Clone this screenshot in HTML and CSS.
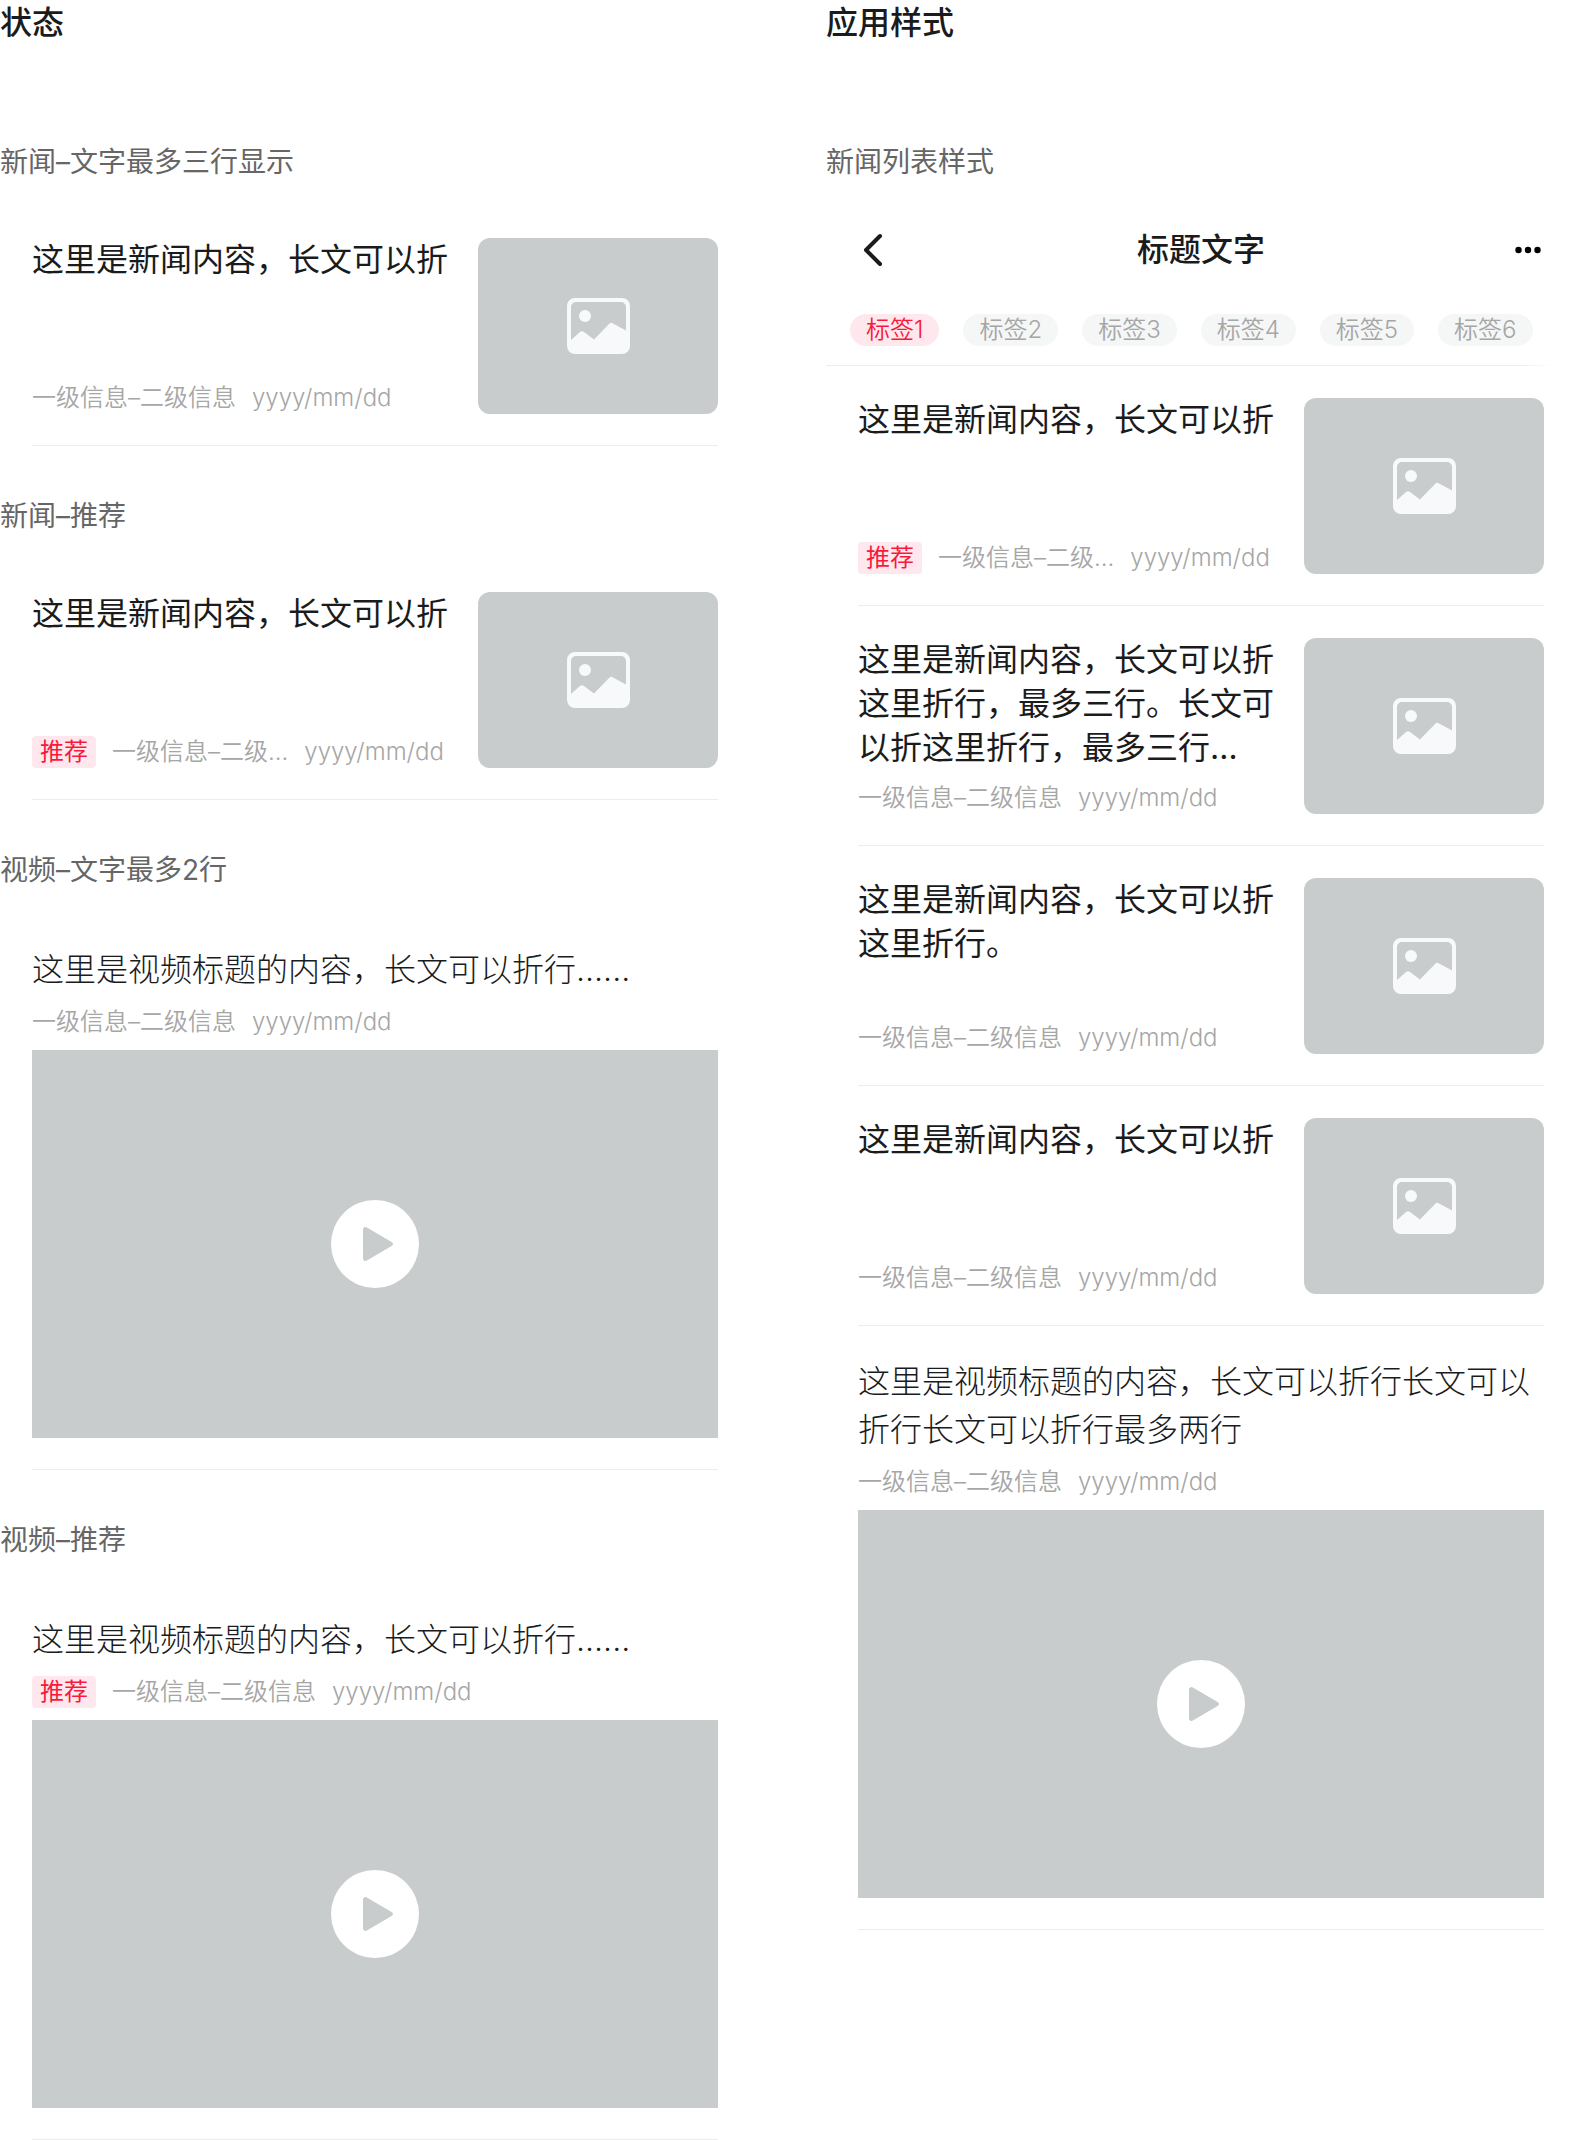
FILE: index.html
```html
<!DOCTYPE html>
<html lang="zh-CN">
<head>
<meta charset="utf-8">
<meta name="viewport" content="width=device-width, initial-scale=1">
<title>新闻列表</title>
<link rel="stylesheet" href="styles.css">
</head>
<body>
<svg class="sprite" aria-hidden="true">
  <symbol id="icon-image" viewBox="-1 0 64 56">
    <path fill-rule="evenodd" d="M8 0h47a8 8 0 0 1 8 8v40a8 8 0 0 1-8 8H8a8 8 0 0 1-8-8V8a8 8 0 0 1 8-8zM9 4a5 5 0 0 0-5 5v33l9-8q2-1.500 4 0l10 7.500L42 26q2-2 4-.5L59 32.500V9a5 5 0 0 0-5-5z"/>
    <circle cx="18" cy="18" r="6"/>
  </symbol>
  <symbol id="icon-play" viewBox="0 0 88 88">
    <circle class="play-disc" cx="44" cy="44" r="44"/>
    <path class="play-arrow" d="M32 29.500a2.500 2.500 0 0 1 3.900-2L61 42.200a2.200 2.200 0 0 1 0 3.600L35.900 60.500a2.500 2.500 0 0 1-3.900-2z"/>
  </symbol>
</svg>
<main class="board">
  <div class="column">
    <h1 class="heading">状态</h1>
    <section class="group">
      <h2 class="label">新闻–文字最多三行显示</h2>
      <article class="news">
        <div class="news-body">
          <h3 class="news-title">这里是新闻内容，长文可以折</h3>
          <p class="meta"><span class="source">一级信息–二级信息</span><time class="date">yyyy/mm/dd</time></p>
        </div>
        <div class="thumb"><svg class="thumb-icon"><use href="#icon-image"/></svg></div>
      </article>
    </section>
    <section class="group">
      <h2 class="label">新闻–推荐</h2>
      <article class="news">
        <div class="news-body">
          <h3 class="news-title">这里是新闻内容，长文可以折</h3>
          <p class="meta"><span class="badge">推荐</span><span class="source">一级信息–二级...</span><time class="date">yyyy/mm/dd</time></p>
        </div>
        <div class="thumb"><svg class="thumb-icon"><use href="#icon-image"/></svg></div>
      </article>
    </section>
    <section class="group">
      <h2 class="label">视频–文字最多2行</h2>
      <article class="video">
        <h3 class="video-title">这里是视频标题的内容，长文可以折行......</h3>
        <p class="meta"><span class="source">一级信息–二级信息</span><time class="date">yyyy/mm/dd</time></p>
        <div class="player"><button class="play" type="button" aria-label="播放"><svg class="play-icon"><use href="#icon-play"/></svg></button></div>
      </article>
    </section>
    <section class="group">
      <h2 class="label">视频–推荐</h2>
      <article class="video">
        <h3 class="video-title">这里是视频标题的内容，长文可以折行......</h3>
        <p class="meta"><span class="badge">推荐</span><span class="source">一级信息–二级信息</span><time class="date">yyyy/mm/dd</time></p>
        <div class="player"><button class="play" type="button" aria-label="播放"><svg class="play-icon"><use href="#icon-play"/></svg></button></div>
      </article>
    </section>
  </div>
  <div class="column">
    <h1 class="heading">应用样式</h1>
    <section class="group">
      <h2 class="label">新闻列表样式</h2>
      <header class="navbar">
        <button class="nav-button" type="button" aria-label="返回"><svg class="nav-icon" viewBox="0 0 48 48"><path class="chevron" d="M30 10 16 24l14 14"/></svg></button>
        <h3 class="nav-title">标题文字</h3>
        <button class="nav-button" type="button" aria-label="更多"><svg class="nav-icon" viewBox="0 0 48 48"><circle cx="14.500" cy="24" r="3.200"/><circle cx="24" cy="24" r="3.200"/><circle cx="33.500" cy="24" r="3.200"/></svg></button>
      </header>
      <nav class="tabs">
        <button class="tab tab-active" type="button">标签1</button>
        <button class="tab" type="button">标签2</button>
        <button class="tab" type="button">标签3</button>
        <button class="tab" type="button">标签4</button>
        <button class="tab" type="button">标签5</button>
        <button class="tab" type="button">标签6</button>
      </nav>
      <article class="news">
        <div class="news-body">
          <h3 class="news-title">这里是新闻内容，长文可以折</h3>
          <p class="meta"><span class="badge">推荐</span><span class="source">一级信息–二级...</span><time class="date">yyyy/mm/dd</time></p>
        </div>
        <div class="thumb"><svg class="thumb-icon"><use href="#icon-image"/></svg></div>
      </article>
      <article class="news">
        <div class="news-body">
          <h3 class="news-title">这里是新闻内容，长文可以折这里折行，最多三行。长文可以折这里折行，最多三行…</h3>
          <p class="meta"><span class="source">一级信息–二级信息</span><time class="date">yyyy/mm/dd</time></p>
        </div>
        <div class="thumb"><svg class="thumb-icon"><use href="#icon-image"/></svg></div>
      </article>
      <article class="news">
        <div class="news-body">
          <h3 class="news-title">这里是新闻内容，长文可以折这里折行。</h3>
          <p class="meta"><span class="source">一级信息–二级信息</span><time class="date">yyyy/mm/dd</time></p>
        </div>
        <div class="thumb"><svg class="thumb-icon"><use href="#icon-image"/></svg></div>
      </article>
      <article class="news">
        <div class="news-body">
          <h3 class="news-title">这里是新闻内容，长文可以折</h3>
          <p class="meta"><span class="source">一级信息–二级信息</span><time class="date">yyyy/mm/dd</time></p>
        </div>
        <div class="thumb"><svg class="thumb-icon"><use href="#icon-image"/></svg></div>
      </article>
      <article class="video">
        <h3 class="video-title">这里是视频标题的内容，长文可以折行长文可以折行长文可以折行最多两行</h3>
        <p class="meta"><span class="source">一级信息–二级信息</span><time class="date">yyyy/mm/dd</time></p>
        <div class="player"><button class="play" type="button" aria-label="播放"><svg class="play-icon"><use href="#icon-play"/></svg></button></div>
      </article>
    </section>
  </div>
</main>
</body>
</html>
```

FILE: styles.css
```css
* {
  box-sizing: border-box;
}

body {
  margin: 0;
  background: #fff;
  color: #1a1b1c;
  font-family: Inter, "Noto Sans CJK SC", sans-serif;
  font-weight: 400;
}

h1, h2, h3, p {
  margin: 0;
}

button {
  border: 0;
  padding: 0;
  background: none;
  color: inherit;
  font: inherit;
  cursor: pointer;
}

.sprite {
  display: none;
}

.board {
  display: grid;
  grid-template-columns: minmax(0, 1fr) minmax(0, 1fr);
  gap: 76px;
}

.heading {
  margin-bottom: 46px;
  font-size: 32px;
  font-weight: 500;
  line-height: 46px;
}

.group {
  padding-top: 48px;
}

.label {
  margin-bottom: 22px;
  color: #666;
  font-size: 28px;
  font-weight: 400;
  line-height: 44px;
}

/* News row: text on the left, thumbnail on the right */
.news {
  display: flex;
  gap: 28px;
  margin: 0 32px;
  padding: 32px 0 31px;
  border-bottom: 1px solid #ebedee;
}

.news-body {
  display: flex;
  flex: 1;
  flex-direction: column;
  justify-content: space-between;
  min-width: 0;
}

.news-title {
  font-size: 32px;
  font-weight: 400;
  line-height: 44px;
}

.thumb {
  display: flex;
  flex: none;
  align-items: center;
  justify-content: center;
  width: 240px;
  height: 176px;
  border-radius: 12px;
  background: #c8cccd;
}

.thumb-icon {
  width: 64px;
  height: 56px;
  fill: #f8f9fb;
}

.meta {
  display: flex;
  gap: 16px;
  color: #a6a6a6;
  font-size: 24px;
  font-weight: 350;
  line-height: 32px;
  white-space: nowrap;
}

.badge {
  padding: 0 8px;
  border-radius: 4px;
  background: #ffe8ed;
  color: #f8193c;
  font-weight: 400;
}

/* Video row: title and meta above a full-width player */
.video {
  display: flex;
  flex-direction: column;
  gap: 12px;
  margin: 0 32px;
  padding: 32px 0 31px;
  border-bottom: 1px solid #ebedee;
}

.video-title {
  font-size: 32px;
  font-weight: 300;
  line-height: 48px;
}

.player {
  display: flex;
  align-items: center;
  justify-content: center;
  aspect-ratio: 686 / 388;
  background: #c8cccd;
}

.play,
.play-icon {
  display: block;
  width: 88px;
  height: 88px;
}

.play-disc {
  fill: #fff;
}

.play-arrow {
  fill: #c8cccd;
}

.navbar {
  display: flex;
  align-items: center;
  justify-content: space-between;
  padding: 20px 24px;
}

.nav-button,
.nav-icon {
  display: block;
  width: 48px;
  height: 48px;
}

.nav-title {
  font-size: 32px;
  font-weight: 500;
  line-height: 48px;
}

.chevron {
  fill: none;
  stroke: #1a1b1c;
  stroke-width: 4;
  stroke-linecap: round;
  stroke-linejoin: round;
}

/* The divider fades out where the tab strip scrolls off */
.tabs {
  display: flex;
  gap: 24px;
  padding: 20px 24px;
  background: linear-gradient(to right, #ebedee calc(100% - 56px), #fff calc(100% - 24px)) bottom / 100% 1px no-repeat;
  overflow: hidden;
}

.tab {
  flex: none;
  padding: 0 16px;
  border-radius: 16px;
  background: #f5f7f7;
  color: #a6a6a6;
  font-size: 24px;
  font-weight: 350;
  line-height: 32px;
}

.tab-active {
  background: #ffe8ed;
  color: #f8193c;
}
```
